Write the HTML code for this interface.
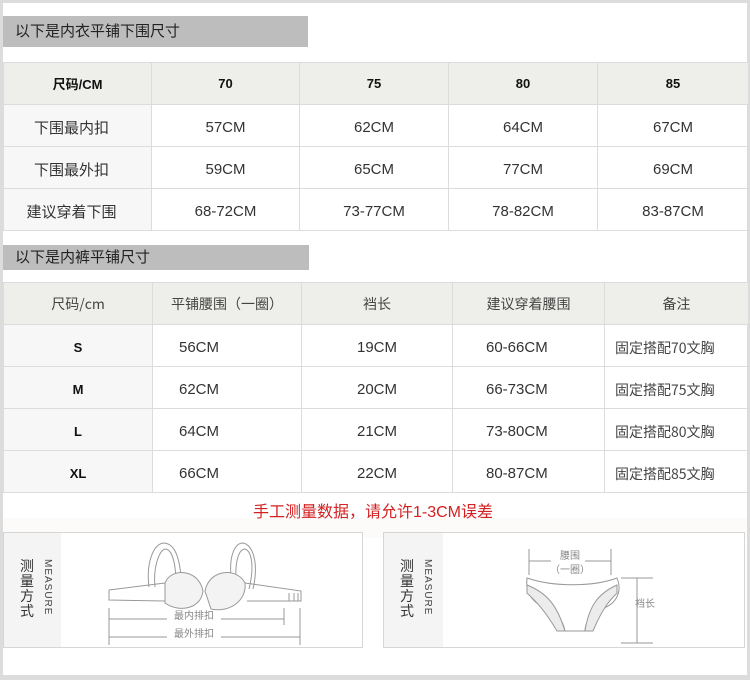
<!DOCTYPE html>
<html><head><meta charset="utf-8"><style>
*{margin:0;padding:0;box-sizing:border-box}
body{width:750px;height:680px;background:#dcdcdc;position:relative;overflow:hidden;font-family:"Liberation Sans","Noto Sans CJK SC",sans-serif;color:#333}
.page{position:absolute;left:3px;top:3px;width:744px;height:672px;background:#fff}
.a{position:absolute}
.h{position:absolute;background:#bdbdbd;color:#222;font-size:15px;padding-left:12px}
table{position:absolute;border-collapse:collapse;table-layout:fixed}
td{border:1px solid #dcdcdc;text-align:center;font-size:15px;color:#333;padding-top:4px}
tr.hd td{background:#eeeeea;padding-top:0}
td.f{background:#f7f7f7}
.b{font-weight:bold;font-size:13px;color:#111}
.s{font-family:"Noto Sans CJK SC",sans-serif;font-size:14px;color:#444}
.panel{position:absolute;border:1px solid #d6d6d6;background:#fff;top:532px;height:116px}
.lab{position:absolute;left:0;top:0;width:57px;height:114px;background:#f4f4f4}
.lab .cn{position:absolute;left:16px;top:26px;width:14px;font-size:14px;line-height:15px;color:#333;font-family:"Noto Sans CJK SC",sans-serif}
.lab .en{position:absolute;left:38px;top:26px;writing-mode:vertical-rl;font-size:10px;letter-spacing:1px;color:#444}
</style></head><body>
<div class="page"></div>
<div class="h" style="left:3px;top:16px;width:305px;height:31px;line-height:31px">以下是内衣平铺下围尺寸</div>
<table style="left:3px;top:62px;width:745px">
<colgroup><col style="width:148px"><col style="width:148px"><col style="width:149px"><col style="width:149px"><col style="width:151px"></colgroup>
<tr class="hd" style="height:42px"><td class="b">尺码/CM</td><td class="b">70</td><td class="b">75</td><td class="b">80</td><td class="b">85</td></tr>
<tr style="height:42px"><td class="f" style="padding-right:12px">下围最内扣</td><td>57CM</td><td>62CM</td><td>64CM</td><td>67CM</td></tr>
<tr style="height:42px"><td class="f" style="padding-right:12px">下围最外扣</td><td>59CM</td><td>65CM</td><td>77CM</td><td>69CM</td></tr>
<tr style="height:42px"><td class="f" style="padding-right:12px">建议穿着下围</td><td>68-72CM</td><td>73-77CM</td><td>78-82CM</td><td>83-87CM</td></tr>
</table>
<div class="h" style="left:3px;top:245px;width:306px;height:25px;line-height:25px">以下是内裤平铺尺寸</div>
<table style="left:3px;top:282px;width:745px">
<colgroup><col style="width:149px"><col style="width:149px"><col style="width:151px"><col style="width:152px"><col style="width:144px"></colgroup>
<tr class="hd" style="height:42px"><td class="s">尺码/cm</td><td class="s">平铺腰围（一圈）</td><td class="s">裆长</td><td class="s">建议穿着腰围</td><td class="s">备注</td></tr>
<tr style="height:42px"><td class="f b">S</td><td style="text-align:left;padding-left:26px">56CM</td><td>19CM</td><td style="text-align:left;padding-left:33px">60-66CM</td><td class="s" style="text-align:left;padding-left:10px">固定搭配70文胸</td></tr>
<tr style="height:42px"><td class="f b">M</td><td style="text-align:left;padding-left:26px">62CM</td><td>20CM</td><td style="text-align:left;padding-left:33px">66-73CM</td><td class="s" style="text-align:left;padding-left:10px">固定搭配75文胸</td></tr>
<tr style="height:42px"><td class="f b">L</td><td style="text-align:left;padding-left:26px">64CM</td><td>21CM</td><td style="text-align:left;padding-left:33px">73-80CM</td><td class="s" style="text-align:left;padding-left:10px">固定搭配80文胸</td></tr>
<tr style="height:42px"><td class="f b">XL</td><td style="text-align:left;padding-left:26px">66CM</td><td>22CM</td><td style="text-align:left;padding-left:33px">80-87CM</td><td class="s" style="text-align:left;padding-left:10px">固定搭配85文胸</td></tr>
</table>
<div class="a" style="left:3px;top:518px;width:744px;height:20px;background:#fdfafa"></div>
<div class="a" style="left:0;top:498px;width:746px;text-align:center;font-size:16px;color:#d42020">手工测量数据，请允许1-3CM误差</div>

<div class="panel" style="left:3px;width:360px">
<div class="lab"><div class="cn">测量方式</div><div class="en">MEASURE</div></div>
<svg class="a" style="left:57px;top:0" width="300" height="114" viewBox="0 0 300 114" fill="none" stroke="#999" stroke-width="1">
<path d="M88 54 C85 30 92 12 102 10 C112 10 118 20 120 44 M94 54 C92 34 98 18 104 16 C110 16 114 26 115 46"/>
<path d="M170 44 C168 22 174 10 182 10 C192 12 198 30 192 56 M175 46 C174 28 178 16 184 16 C190 18 194 32 188 56"/>
<path d="M104 50 C110 34 138 36 142 58 C140 76 118 80 104 70 Z" fill="#f3f3f3"/>
<path d="M144 58 C148 36 176 34 184 50 C186 68 168 80 150 76 Z" fill="#f3f3f3"/>
<path d="M48 57 L104 50 M48 57 L48 67 L104 68 M184 50 L240 58 L240 68 L186 68"/>
<path d="M228 60 V68 M233 60 V68 M237 60 V68"/>
<path d="M48 75 V98 M48 86 H106 M160 86 H223 M223 75 V92 M239 75 V112 M48 97 V112 M48 104 H106 M160 104 H239"/>
<text x="133" y="86" font-size="10" fill="#888" stroke="none" text-anchor="middle" font-family="Noto Sans CJK SC">最内排扣</text>
<text x="133" y="104" font-size="10" fill="#888" stroke="none" text-anchor="middle" font-family="Noto Sans CJK SC">最外排扣</text>
</svg>
</div>
<div class="panel" style="left:383px;width:362px">
<div class="lab" style="width:59px"><div class="cn">测量方式</div><div class="en">MEASURE</div></div>
<svg class="a" style="left:59px;top:0" width="300" height="114" viewBox="0 0 300 114" fill="none" stroke="#999" stroke-width="1">
<path d="M86 16 V42 M86 28 H108 M142 28 H168 M168 16 V42"/>
<path d="M84 45 C110 54 150 54 174 45 C180 60 172 72 158 76 C148 80 142 90 142 98 L122 98 C120 88 114 80 104 76 C90 70 82 60 84 45 Z"/>
<path d="M84 52 C104 60 114 72 122 98 L114 98 C100 74 90 66 84 60 Z" fill="#ececec"/>
<path d="M174 52 C156 60 146 72 142 98 L150 98 C160 74 168 66 174 60 Z" fill="#ececec"/>
<path d="M178 45 H210 M194 45 V110 M178 110 H210"/>
<text x="127" y="26" font-size="10" fill="#888" stroke="none" text-anchor="middle" font-family="Noto Sans CJK SC">腰围</text>
<text x="127" y="40" font-size="10" fill="#888" stroke="none" text-anchor="middle" font-family="Noto Sans CJK SC">（一圈）</text>
<text x="202" y="74" font-size="10" fill="#888" stroke="none" text-anchor="middle" font-family="Noto Sans CJK SC">裆长</text>
</svg>
</div>
</body></html>
